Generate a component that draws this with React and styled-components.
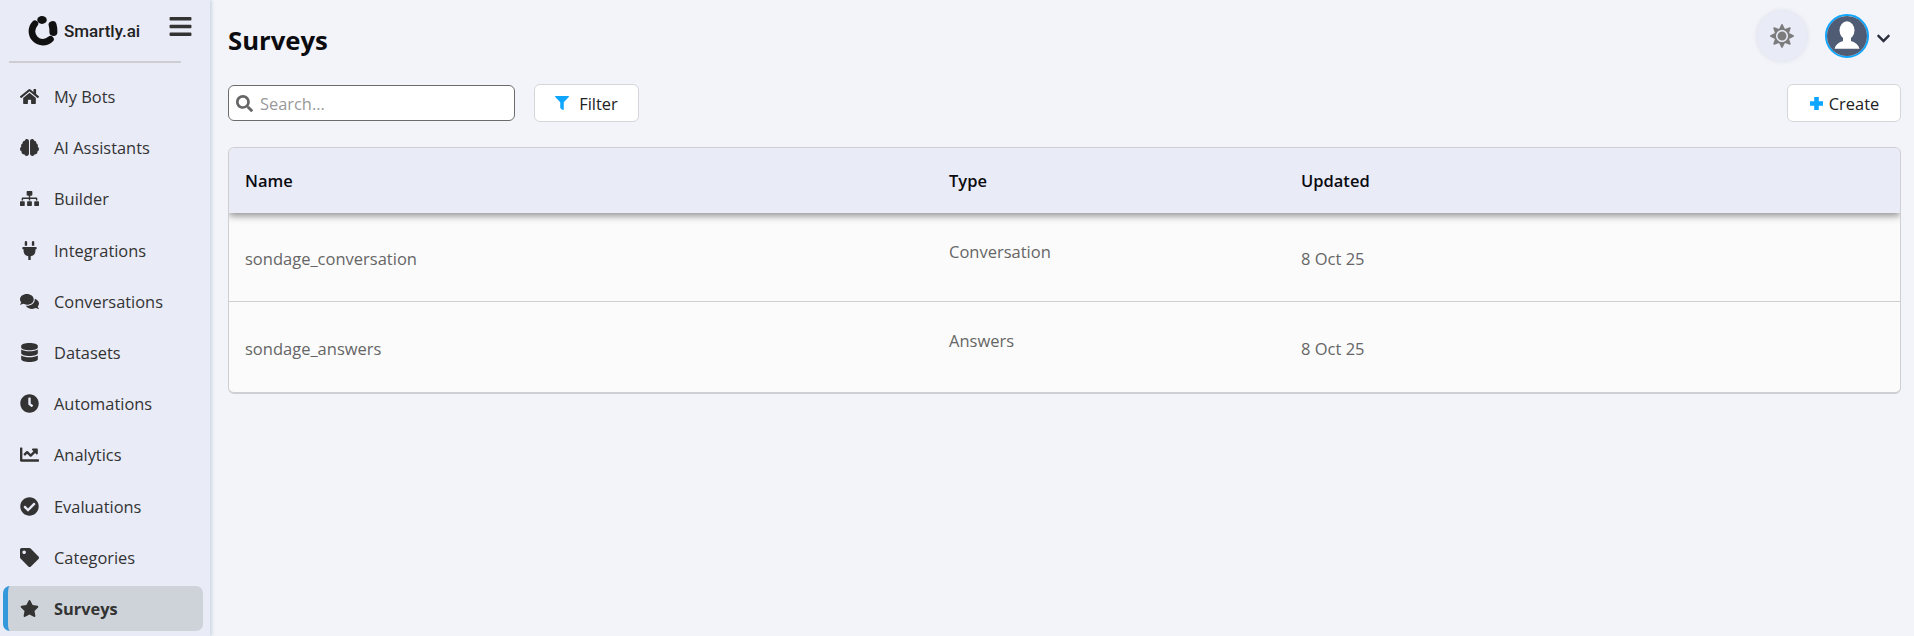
import React from 'react';
import styled, { createGlobalStyle } from 'styled-components';
import {
  FaHome, FaBrain, FaSitemap, FaPlug, FaComments, FaDatabase, FaClock, FaChartLine,
  FaCheckCircle, FaTag, FaStar, FaSearch, FaFilter, FaBars, FaChevronDown, FaSun,
} from 'react-icons/fa';

const GlobalStyle = createGlobalStyle`
  html, body { margin: 0; padding: 0; height: 100%; overflow: hidden; }
  body { background: #f2f4f9; font-family: "Open Sans", "Noto Sans", sans-serif; }
`;

const Layout = styled.div`
  display: flex;
  height: 636px;
`;

const Sidebar = styled.aside`
  flex: 0 0 210px;
  min-width: 0;
  box-sizing: border-box;
  background: #e9ebf7;
  box-shadow: 2px 0 3px #cfd8e4;
  padding: 0 7px 0 3px;
`;

const Brand = styled.div`
  height: 61px;
  box-sizing: border-box;
  display: flex;
  align-items: flex-start;
  padding: 16px 0 0 25px;
`;

const BrandName = styled.span`
  font-family: Roboto, sans-serif;
  font-size: 17px;
  font-weight: 500;
  color: #222;
  margin: 5px 0 0 6px;
`;

const Burger = styled.span`
  display: flex;
  margin: -2px 0 0 28px;
  color: #333;
  font-size: 25px;
`;

const Divider = styled.hr`
  height: 2px;
  margin: 0 22px 0 6px;
  border: 0;
  background: #cdcdd2;
`;

const Nav = styled.nav`
  display: flex;
  flex-direction: column;
  gap: 6.2px;
  margin-top: 11px;
`;

const NavItem = styled.a`
  height: 45px;
  box-sizing: border-box;
  display: flex;
  align-items: center;
  padding-left: ${p => (p.$active ? '11px' : '16px')};
  border-left: ${p => (p.$active ? '5px solid #3498db' : 'none')};
  border-radius: 7px;
  background: ${p => (p.$active ? '#cdd3d8' : 'transparent')};
  color: #333;
  font-size: 16.4px;
  font-weight: ${p => (p.$active ? 700 : 400)};
`;

const NavIcon = styled.span`
  flex: 0 0 21px;
  display: flex;
  justify-content: center;
  margin-right: 14px;
  font-size: 19px;
  color: #333;
`;

const Main = styled.main`
  flex: 1;
  min-width: 0;
  padding: 0 13px 0 18px;
`;

const Header = styled.header`
  height: 84px;
  display: flex;
  align-items: flex-start;
  justify-content: space-between;
`;

const Title = styled.h1`
  margin: 21px 0 0;
  font-size: 25.7px;
  line-height: 40px;
  font-weight: 700;
  color: #0b0b10;
`;

const HeaderActions = styled.div`
  display: flex;
  align-items: center;
  padding: 11px 10px 0 0;
`;

const ThemeButton = styled.span`
  width: 50px;
  height: 50px;
  border-radius: 50%;
  background: #e9ebf7;
  box-shadow: 0 0 5px #d9dbe6;
  display: flex;
  align-items: center;
  justify-content: center;
  color: #7c7c7c;
  font-size: 24px;
  margin-right: 18px;
`;

const Avatar = styled.span`
  width: 44px;
  height: 44px;
  box-sizing: border-box;
  border: 2px solid #0ea5ff;
  border-radius: 50%;
  overflow: hidden;
  display: flex;
  margin-right: 7px;
`;

const Caret = styled.span`
  display: flex;
  margin-top: 4px;
  color: #2a2f3c;
  font-size: 15px;
`;

const Toolbar = styled.div`
  display: flex;
  align-items: center;
  height: 38px;
`;

const SearchBox = styled.label`
  width: 287px;
  height: 36px;
  box-sizing: border-box;
  background: #fff;
  border: 1px solid #6c6c6c;
  border-radius: 6px;
  display: flex;
  align-items: center;
  padding-left: 7px;
  color: #666;
  font-size: 16.4px;
`;

const SearchInput = styled.input`
  flex: 1;
  min-width: 0;
  border: 0;
  outline: 0;
  background: transparent;
  margin-left: 7px;
  padding: 0;
  font: inherit;
  &::placeholder { color: #999; opacity: 1; }
`;

const Button = styled.button`
  height: 38px;
  box-sizing: border-box;
  width: ${p => p.$width};
  margin-left: ${p => p.$left || 0};
  padding: 0;
  background: #fff;
  border: 1px solid #d6d6da;
  border-radius: 6px;
  display: flex;
  align-items: center;
  justify-content: center;
  color: #222;
  font: inherit;
  font-size: 16.4px;
  svg { color: #0ea5ff; margin-right: ${p => p.$iconGap}; }
`;

const Table = styled.section`
  margin: 25px 0 0;
  height: 247px;
  box-sizing: border-box;
  border: 1px solid #cfcfd3;
  border-bottom-width: 2px;
  border-radius: 6px;
  background: #fbfbfb;
  overflow: hidden;
`;

const Row = styled.div`
  display: grid;
  grid-template-columns: 704px 352px 1fr;
  height: ${p => (p.$head ? '65px' : '89px')};
  align-items: center;
  box-sizing: border-box;
  position: relative;
  padding-top: ${p => (p.$head ? 0 : '3px')};
  background: ${p => (p.$head ? '#e9ebf7' : 'transparent')};
  box-shadow: ${p => (p.$head ? '0 3px 7px rgba(0, 0, 0, 0.42)' : 'none')};
  border-bottom: ${p => (p.$divider ? '1px solid #cfcfd3' : 'none')};
  color: ${p => (p.$head ? '#0b0b10' : '#666')};
  font-size: 16.5px;
  font-weight: ${p => (p.$head ? 600 : 400)};
`;

const Cell = styled.div`
  padding-left: 16px;
  margin-top: ${p => (p.$raised ? '-15px' : 0)};
`;

const Logo = () => (
  <svg width="30" height="30" viewBox="0 0 30 30">
    <ellipse cx="14" cy="4" rx="4.8" ry="3.9" fill="#111" />
    <path d="M6.9 7.7 A 11 11 0 0 0 22.5 23.2" fill="none" stroke="#111" strokeWidth="6.6" strokeLinecap="round" />
    <path d="M24.6 9 Q 25.6 12.5 25.4 16" fill="none" stroke="#111" strokeWidth="8" strokeLinecap="round" />
  </svg>
);

const UserPicture = () => (
  <svg width="40" height="40" viewBox="0 0 40 40">
    <rect width="40" height="40" fill="#4f5c74" />
    <ellipse cx="20" cy="14.3" rx="7.5" ry="9" fill="#fff" />
    <path d="M16 21 L16 25 Q 9 27 7.5 32.7 L32.5 32.7 Q 31 27 24 25 L24 21 Z" fill="#fff" />
  </svg>
);

const PlusIcon = () => (
  <svg width="15" height="15" viewBox="0 0 15 15">
    <path d="M7.5 1 V14 M1 7.5 H14" fill="none" stroke="currentColor" strokeWidth="4.6" strokeLinecap="butt" />
  </svg>
);

const navItems = [
  { label: 'My Bots', icon: FaHome },
  { label: 'AI Assistants', icon: FaBrain },
  { label: 'Builder', icon: FaSitemap },
  { label: 'Integrations', icon: FaPlug },
  { label: 'Conversations', icon: FaComments },
  { label: 'Datasets', icon: FaDatabase },
  { label: 'Automations', icon: FaClock },
  { label: 'Analytics', icon: FaChartLine },
  { label: 'Evaluations', icon: FaCheckCircle },
  { label: 'Categories', icon: FaTag },
  { label: 'Surveys', icon: FaStar, active: true },
];

const surveys = [
  { name: 'sondage_conversation', type: 'Conversation', updated: '8 Oct 25' },
  { name: 'sondage_answers', type: 'Answers', updated: '8 Oct 25' },
];

export default function App() {
  return (
    <Layout>
      <GlobalStyle />
      <Sidebar>
        <Brand>
          <Logo />
          <BrandName>Smartly.ai</BrandName>
          <Burger><FaBars /></Burger>
        </Brand>
        <Divider />
        <Nav>
          {navItems.map(({ label, icon: Icon, active }) => (
            <NavItem key={label} $active={active}>
              <NavIcon><Icon /></NavIcon>
              {label}
            </NavItem>
          ))}
        </Nav>
      </Sidebar>
      <Main>
        <Header>
          <Title>Surveys</Title>
          <HeaderActions>
            <ThemeButton><FaSun /></ThemeButton>
            <Avatar><UserPicture /></Avatar>
            <Caret><FaChevronDown /></Caret>
          </HeaderActions>
        </Header>
        <Toolbar>
          <SearchBox>
            <FaSearch size={17} />
            <SearchInput placeholder="Search..." />
          </SearchBox>
          <Button $width="105px" $left="19px" $iconGap="10px"><FaFilter size={14} />Filter</Button>
          <Button $width="114px" $left="auto" $iconGap="5px"><PlusIcon />Create</Button>
        </Toolbar>
        <Table>
          <Row $head>
            <Cell>Name</Cell>
            <Cell>Type</Cell>
            <Cell>Updated</Cell>
          </Row>
          {surveys.map((survey, i) => (
            <Row key={survey.name} $divider={i === 0}>
              <Cell>{survey.name}</Cell>
              <Cell $raised>{survey.type}</Cell>
              <Cell>{survey.updated}</Cell>
            </Row>
          ))}
        </Table>
      </Main>
    </Layout>
  );
}
